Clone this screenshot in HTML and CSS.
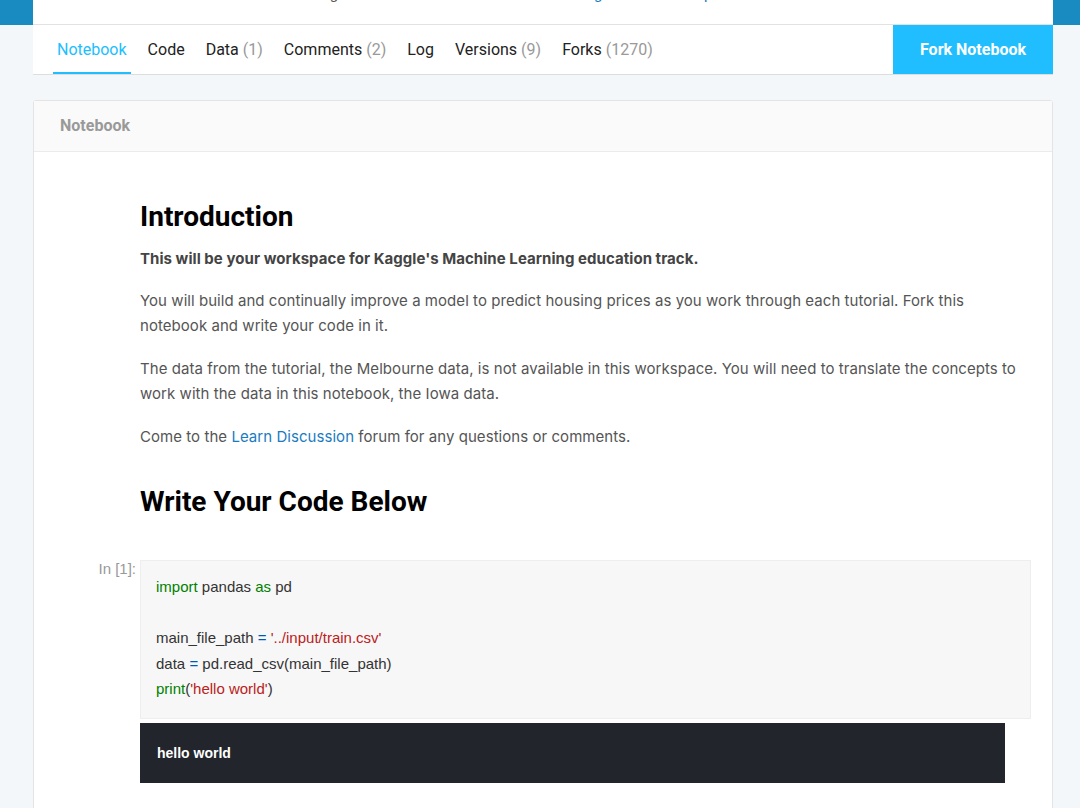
FILE: index.html
```html
<!DOCTYPE html>
<html lang="en">
<head>
    <meta charset="UTF-8">
    <meta name="viewport" content="width=device-width, initial-scale=1.0">
    <title>Notebook</title>
    <link rel="stylesheet" href="styles.css">
</head>
<body>
    <header class="hero">
        <div class="hero-inner">
            <div class="hero-text">
                <span class="hero-owner">using data from</span>
                <a href="#">House Prices: Advanced Regression Techniques</a>
                <span class="hero-meta">&middot; Public</span>
            </div>
        </div>
    </header>

    <nav class="tabs">
        <div class="tab-links">
            <a href="#" class="tab active">Notebook</a>
            <a href="#" class="tab">Code</a>
            <a href="#" class="tab">Data <span class="count">(1)</span></a>
            <a href="#" class="tab">Comments <span class="count">(2)</span></a>
            <a href="#" class="tab">Log</a>
            <a href="#" class="tab">Versions <span class="count">(9)</span></a>
            <a href="#" class="tab">Forks <span class="count">(1270)</span></a>
        </div>
        <a href="#" class="fork-btn">Fork Notebook</a>
    </nav>

    <section class="panel">
        <div class="panel-header">Notebook</div>
        <div class="nb-body">
            <div class="cell">
                <div class="prompt"></div>
                <div class="cell-content markdown">
                    <h1>Introduction</h1>
                    <p class="lead">This will be your workspace for Kaggle's Machine Learning education track.</p>
                    <p>You will build and continually improve a model to predict housing prices as you work through each tutorial. Fork this notebook and write your code in it.</p>
                    <p>The data from the tutorial, the Melbourne data, is not available in this workspace. You will need to translate the concepts to work with the data in this notebook, the Iowa data.</p>
                    <p>Come to the <a href="#">Learn Discussion</a> forum for any questions or comments.</p>
                    <h1 class="second">Write Your Code Below</h1>
                </div>
            </div>

            <div class="cell code-cell">
                <div class="prompt">In [1]:</div>
                <div class="cell-content">
                    <pre class="code"><span class="kw">import</span> pandas <span class="kw">as</span> pd

main_file_path <span class="op">=</span> <span class="str">'../input/train.csv'</span>
data <span class="op">=</span> pd.read_csv(main_file_path)
<span class="kw">print</span>(<span class="str">'hello world'</span>)</pre>
                    <div class="output">hello world</div>
                </div>
            </div>
        </div>
    </section>
</body>
</html>
```

FILE: styles.css
```css
* {
    margin: 0;
    padding: 0;
    box-sizing: border-box;
}

body {
    font-family: 'Roboto', 'Liberation Sans', sans-serif;
    background-color: #f4f7f9;
    color: #222;
    overflow: hidden;
}

a {
    text-decoration: none;
}

/* Header strip */
.hero {
    background-color: #1a8bc1;
    height: 25px;
}

.hero-inner {
    margin-left: 33px;
    width: 1020px;
    height: 25px;
    background-color: #fff;
    border-bottom: 1px solid #e2e2e2;
    overflow: hidden;
}

.hero-text {
    margin-top: -16px;
    text-align: center;
    font-size: 15px;
    line-height: 20px;
    color: #555;
}

.hero-text a {
    color: #1a7bc1;
}

/* Tabs */
.tabs {
    margin-left: 33px;
    width: 1020px;
    height: 50px;
    background-color: #fff;
    border-bottom: 1px solid #dedede;
    display: flex;
    justify-content: space-between;
}

.tab-links {
    display: flex;
    gap: 13px;
    padding-left: 20px;
}

.tab {
    padding: 1px 4px 0;
    font-size: 16px;
    line-height: 47px;
    color: #222;
    border-bottom: 2px solid transparent;
}

.tab.active {
    color: #20beff;
    border-bottom-color: #20beff;
}

.tab .count {
    color: #999;
}

.fork-btn {
    width: 160px;
    background-color: #20beff;
    color: #fff;
    font-weight: bold;
    font-size: 16px;
    line-height: 49px;
    text-align: center;
}

/* Notebook panel */
.panel {
    margin: 25px 0 0 33px;
    width: 1020px;
    background-color: #fff;
    border: 1px solid #e4e4e4;
    border-radius: 3px;
}

.panel-header {
    height: 51px;
    padding-left: 26px;
    background-color: #fafafa;
    border-bottom: 1px solid #ebebeb;
    font-size: 16px;
    font-weight: bold;
    line-height: 50px;
    color: #999;
}

.nb-body {
    padding: 48px 21px 40px 0;
}

.cell {
    display: flex;
}

.prompt {
    width: 106px;
    flex-shrink: 0;
    padding-right: 4px;
    text-align: right;
    font-family: 'Liberation Sans', sans-serif;
    font-size: 15px;
    line-height: 18px;
    color: #999;
}

.cell-content {
    flex: 1;
    min-width: 0;
}

/* Markdown */
.markdown {
    padding-right: 12px;
}

.markdown h1 {
    font-size: 28px;
    line-height: 34px;
    font-weight: bold;
    color: #000;
    margin-bottom: 12px;
}

.markdown h1.second {
    margin-top: 36px;
    margin-bottom: 0;
}

.markdown p {
    font-family: 'Inter', 'Roboto', sans-serif;
    font-size: 15px;
    line-height: 25px;
    letter-spacing: 0.05px;
    color: #555;
    margin-bottom: 18px;
}

.markdown p.lead {
    font-weight: bold;
    color: #444;
    margin-bottom: 17px;
}

.markdown a {
    color: #1a7bc1;
}

/* Code cell */
.code-cell {
    margin-top: 41px;
}

.code {
    background-color: #f7f7f7;
    border: 1px solid #eeeeee;
    padding: 13px 15px 16px;
    font-family: 'Liberation Sans', sans-serif;
    font-size: 15px;
    line-height: 25.6px;
    color: #333;
    white-space: pre;
}

.code .kw {
    color: #008000;
}

.code .op {
    color: #0057b8;
}

.code .str {
    color: #ba2121;
}

.output {
    margin: 4px 26px 0 0;
    height: 60px;
    padding: 0 17px;
    background-color: #22252b;
    color: #fff;
    font-family: 'Liberation Sans', sans-serif;
    font-size: 14px;
    font-weight: bold;
    line-height: 60px;
}
```
